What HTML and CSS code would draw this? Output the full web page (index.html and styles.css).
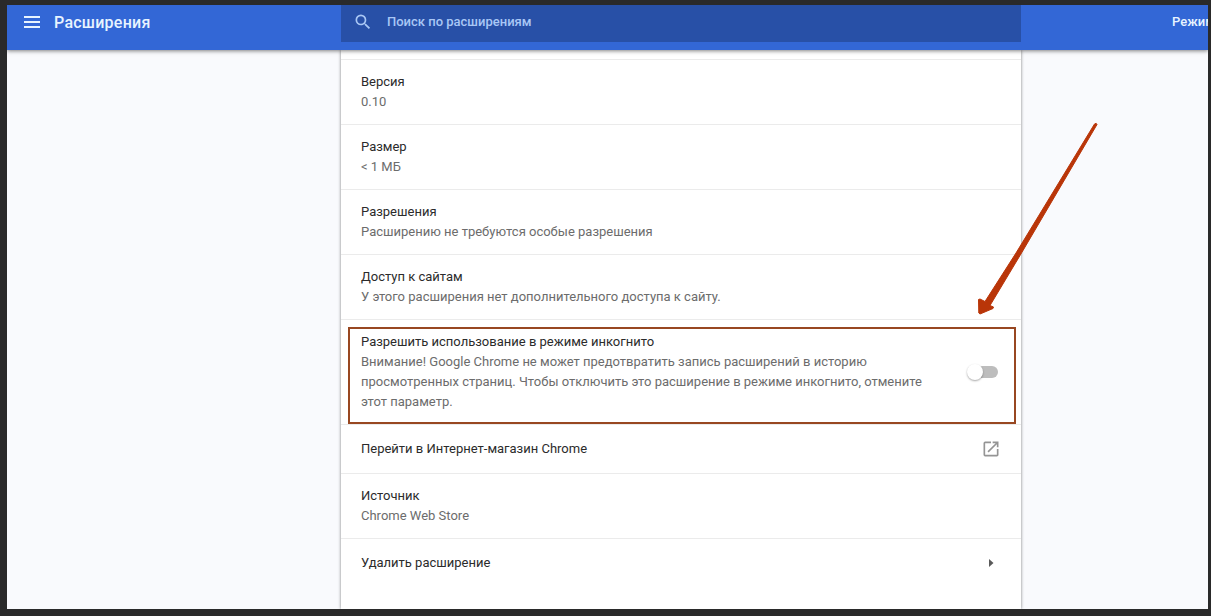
FILE: index.html
```html
<!DOCTYPE html>
<html lang="ru">
<head>
<meta charset="utf-8">
<title>Расширения</title>
<link rel="stylesheet" href="styles.css">
</head>
<body>
<div class="window">
  <header class="toolbar">
    <div class="brand">
      <svg class="menu" width="16" height="12" viewBox="0 0 16 12"><path d="M0 0h16v2H0zM0 5h16v2H0zM0 10h16v2H0z" fill="currentColor"/></svg>
      <h1 class="title">Расширения</h1>
    </div>
    <div class="search">
      <svg class="search-icon" width="20" height="20" viewBox="0 0 24 24"><path fill="currentColor" d="M15.5 14h-.79l-.28-.27A6.47 6.47 0 0 0 16 9.5 6.5 6.5 0 1 0 9.5 16c1.61 0 3.09-.59 4.23-1.57l.27.28v.79l5 4.99L20.49 19l-4.99-5zm-6 0C7.01 14 5 11.99 5 9.500S7.010 5 9.500 5 14 7.010 14 9.500 11.990 14 9.500 14z"/></svg>
      <span class="search-text">Поиск по расширениям</span>
    </div>
    <div class="mode"><span class="mode-text">Режим</span></div>
  </header>
  <main class="content">
    <section class="card">
      <div class="row row-top"></div>
      <div class="row"><div class="label">Версия</div><div class="value">0.10</div></div>
      <div class="row"><div class="label">Размер</div><div class="value">&lt; 1 МБ</div></div>
      <div class="row"><div class="label">Разрешения</div><div class="value">Расширению не требуются особые разрешения</div></div>
      <div class="row"><div class="label">Доступ к сайтам</div><div class="value">У этого расширения нет дополнительного доступа к сайту.</div></div>
      <div class="row row-split highlighted">
        <div>
          <div class="label">Разрешить использование в режиме инкогнито</div>
          <div class="value">Внимание! Google Chrome не может предотвратить запись расширений в историю<br>просмотренных страниц. Чтобы отключить это расширение в режиме инкогнито, отмените<br>этот параметр.</div>
        </div>
        <div class="toggle"><div class="knob"></div></div>
      </div>
      <div class="row row-split row-link">
        <div class="label">Перейти в Интернет-магазин Chrome</div>
        <svg class="open-icon" width="20" height="20" viewBox="0 0 24 24"><path fill="currentColor" d="M19 19H5V5h7V3H5a2 2 0 0 0-2 2v14a2 2 0 0 0 2 2h14c1.100 0 2-.9 2-2v-7h-2v7zM14 3v2h3.590l-9.830 9.830 1.410 1.410L19 6.410V10h2V3h-7z"/></svg>
      </div>
      <div class="row"><div class="label">Источник</div><div class="value">Chrome Web Store</div></div>
      <div class="row row-split row-link row-last">
        <div class="label">Удалить расширение</div>
        <svg class="caret" width="20" height="20" viewBox="0 0 20 20"><path fill="currentColor" d="M8 6l4.500 4L8 14z"/></svg>
      </div>
    </section>
  </main>
</div>
<svg class="arrow" width="124" height="200" viewBox="0 0 124 200"><path fill="#b93508" stroke="#b93508" stroke-linejoin="round" d="M119.500 4Q121.500 2.500 122 4.500L46.500 133L15 185.500L18.500 187L18 188.500L5 194L3.800 193L3.500 179.500L5 179L10 181.500L41 133Z"/></svg>
</body>
</html>
```
FILE: styles.css
```css
* { box-sizing: border-box; }
body {
  margin: 0;
  width: 1211px;
  height: 616px;
  padding: 5px 3px 7px 7px;
  background: #2a2a2a;
  font: 13px/20px Roboto, sans-serif;
  overflow: hidden;
  position: relative;
}
.window {
  height: 604px;
  background: #f9fafd;
  display: flex;
  flex-direction: column;
  overflow: hidden;
}
.toolbar {
  height: 45px;
  flex: none;
  display: grid;
  grid-template-columns: 334px 680px 1fr;
  background: #3367d6;
  color: #e8f4ff;
  box-shadow: 0 1px 4px rgba(0, 0, 0, .5);
  z-index: 1;
}
.brand {
  height: 35px;
  padding-left: 17px;
  display: flex;
  align-items: center;
  gap: 14px;
}
.menu { margin-top: -1px; }
.title {
  margin: 0;
  font-size: 16px;
  font-weight: 500;
  letter-spacing: .25px;
}
.search {
  height: 37px;
  padding: 0 0 3px 12px;
  display: flex;
  align-items: center;
  gap: 14px;
  background: #2850a7;
  color: #a9c7f5;
}
.search-text, .mode-text { font-weight: 500; }
.mode {
  height: 33px;
  padding-left: 151px;
  display: flex;
  align-items: center;
  white-space: nowrap;
  overflow: hidden;
}
.content { flex: 1; padding-left: 334px; }
.card {
  width: 680px;
  height: 100%;
  background: #fff;
  box-shadow: 0 0 3px rgba(0, 0, 0, .5);
}
.row {
  padding: 12px 20px;
  border-bottom: 1px solid #ebebeb;
}
.row-top { height: 10px; padding: 0; }
.row-split {
  display: flex;
  align-items: center;
  justify-content: space-between;
}
.row-link { height: 49px; padding: 0 20px; }
.row-last { height: 48px; border-bottom: 0; }
.label { color: #2b2b2b; }
.value { color: #6c6c6c; }
.highlighted { position: relative; }
.highlighted::after {
  content: "";
  position: absolute;
  inset: 7px 5px 0 7px;
  border: 2px solid #984721;
}
.toggle {
  width: 28px;
  height: 12px;
  margin-right: 3px;
  border-radius: 6px;
  background: #bdbdbd;
}
.knob {
  width: 16px;
  height: 16px;
  margin: -2px 0 0 -3px;
  border-radius: 50%;
  background: #fff;
  box-shadow: 0 1px 2px rgba(0, 0, 0, .35);
}
.open-icon { color: #959595; }
.caret { color: #5a5a5a; }
.arrow {
  position: absolute;
  left: 975px;
  top: 120px;
  z-index: 2;
}
```
